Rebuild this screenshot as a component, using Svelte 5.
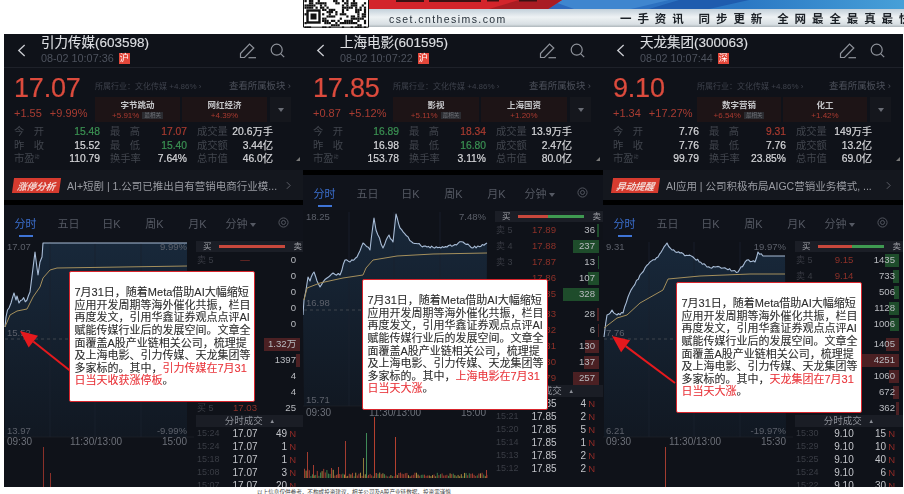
<script>
  function rng(seed) {
    let s = seed;
    return () => {
      s = (s * 16807) % 2147483647;
      return s / 2147483647;
    };
  }

  function densify(pts, amp, seed) {
    const r = rng(seed);
    const out = [];
    for (let i = 0; i < pts.length - 1; i++) {
      const [a, b] = [pts[i], pts[i + 1]];
      const n = Math.max(1, Math.round((b[0] - a[0]) / 1.6));
      for (let k = 0; k < n; k++) {
        const t = k / n;
        out.push([a[0] + (b[0] - a[0]) * t, a[1] + (b[1] - a[1]) * t + (k ? (r() - 0.5) * amp : 0)]);
      }
    }
    out.push(pts[pts.length - 1]);
    return out;
  }

  const toStr = (pts) => pts.map((p) => `${p[0].toFixed(1)},${p[1].toFixed(1)}`).join(' ');
  const shift = (pts, dx) => pts.map((p) => [p[0] - dx, p[1]]);

  function arrowOf(tip, tail) {
    const dx = tail[0] - tip[0];
    const dy = tail[1] - tip[1];
    const len = Math.hypot(dx, dy);
    const ux = dx / len;
    const uy = dy / len;
    const bx = tip[0] + ux * 17;
    const by = tip[1] + uy * 17;
    const head = [
      tip,
      [bx - uy * 7.5, by + ux * 7.5],
      [bx + uy * 7.5, by - ux * 7.5]
    ];
    return { head: toStr(head), x1: bx, y1: by, x2: tail[0], y2: tail[1] };
  }

  const bodyLines = [
    '7月31日，随着Meta借助AI大幅缩短',
    '应用开发周期等海外催化共振，栏目',
    '再度发文，引用华鑫证券观点点评AI',
    '赋能传媒行业后的发展空间。文章全',
    '面覆盖A股产业链相关公司，梳理提',
    '及上海电影、引力传媒、天龙集团等'
  ];

  const p1Line = shift(
    [...densify([[5,327],[6,317],[9,308],[11,303],[14,293],[16,300],[17,296],[19,303],[22,300],[27,300],[30,292],[33,268],[35,252],[37,268],[38,275],[40,262],[42,257],[43,243]], 5, 11), [187,243]],
    4
  );
  const p2Line = shift(
    densify([[303,315],[304,300],[306,290],[308,277],[310,281],[314,272],[317,281],[320,287],[327,278],[333,273],[340,275],[345,260],[350,262],[357,257],[363,243],[370,250],[374,218],[376,230],[383,248],[389,235],[393,242],[396,214],[400,228],[413,243],[427,247],[447,247],[463,242],[473,248],[487,243]], 2.6, 23),
    303
  );
  const p3Line = shift(
    [...densify([[604,337],[607,315],[612,310],[617,315],[623,313],[628,297],[633,287],[640,275],[650,262],[658,257],[667,243],[672,250],[680,253],[693,257],[707,267],[723,268],[738,272],[747,260],[755,262],[758,252],[763,256]], 2.6, 37), [785,256]],
    603
  );

  const p2Vol = [];
  {
    const r = rng(91);
    for (let x = 1; x < 184; x += 1.6) {
      const c = r();
      p2Vol.push({
        x,
        y: 478 - (1.5 + r() * (x < 30 ? 8 : 4)),
        h: 0,
        color: c < 0.5 ? '#9c3b2e' : c < 0.8 ? '#a8873c' : '#3c7a46'
      });
    }
    p2Vol.forEach((b) => (b.h = 478 - b.y));
    [
      [4, 452, '#a33c30'], [10, 465, '#a33c30'], [28, 468, '#a33c30'], [35, 467, '#a33c30'],
      [42, 441, '#a33c30'], [60, 458, '#8f7a3a'], [63, 433, '#3f8a58'], [71, 417, '#b5402f'],
      [92, 437, '#b5402f'], [183, 470, '#a33c30']
    ].forEach(([x, y, color]) => p2Vol.push({ x, y, h: 478 - y, color }));
  }

  const panels = [
    {
      name: '引力传媒(603598)', time: '08-02 10:07:36', mkt: '沪',
      price: '17.07', chg: '+1.55', pct: '+9.99%', leftW: 81,
      chips: [{ n: '字节跳动', v: '+5.91%', tag: true }, { n: '网红经济', v: '+4.39%' }],
      stats: [
        ['今 开', '15.48', 'g', '最 高', '17.07', 'r', '成交量', '20.6万手'],
        ['昨 收', '15.52', '', '最 低', '15.40', 'g', '成交额', '3.44亿'],
        ['市盈', '110.79', '', '换手率', '7.64%', '', '总市值', '46.0亿']
      ],
      alert: { tag: '涨停分析', text: 'AI+短剧 | 1.公司已推出自有营销电商行业模...' },
      bodyTop: 240, base: 339, chartBottom: 437, timeY: 441,
      line: p1Line,
      avg: shift([[5,327],[10,315],[17,311],[27,309],[33,297],[40,287],[43,278],[50,270],[57,268],[187,266]], 4),
      labels: { hi: '17.07', hiPct: '9.99%', mid: '15.52', midY: 336, lo: '13.97', loPct: '-9.99%' },
      times: ['09:30', '11:30/13:00', '15:00'],
      vol: [{ x: 39, y: 447, h: 40, color: '#8a3029' }, { x: 46, y: 473, h: 14, color: '#8a3029' }],
      buyRatio: 1,
      book: [
        ['卖 5', '—', '0', 0, 0], ['', '', '0', 0, 0], ['', '', '0', 0, 0], ['', '', '0', 0, 0], ['', '', '0', 0, 0],
        ['', '', '1.32万', 36, 1], ['', '', '1397', 4, 1], ['', '', '4', 0, 1], ['', '', '4', 0, 1], ['买 5', '17.03', '25', 0, 1]
      ],
      trades: [['15:24','17.07','49'],['15:24','17.07','1'],['15:18','17.07','1'],['15:08','17.07','3'],['15:07','17.07','20']],
      box: { left: 65, top: 237 }, red1: '引力传媒在7月31', red2: '日当天收获涨停板',
      arrow: arrowOf([16, 331], [69, 373])
    },
    {
      name: '上海电影(601595)', time: '08-02 10:07:22', mkt: '沪',
      price: '17.85', chg: '+0.87', pct: '+5.12%', leftW: 80,
      chips: [{ n: '影视', v: '+5.11%', tag: true }, { n: '上海国资', v: '+1.20%' }],
      stats: [
        ['今 开', '16.89', 'g', '最 高', '18.34', 'r', '成交量', '13.9万手'],
        ['昨 收', '16.98', '', '最 低', '16.80', 'g', '成交额', '2.47亿'],
        ['市盈', '153.78', '', '换手率', '3.11%', '', '总市值', '80.0亿']
      ],
      alert: null,
      bodyTop: 210, base: 310, chartBottom: 406, timeY: 412,
      line: p2Line,
      avg: shift([[304,300],[307,288],[320,283],[343,278],[363,275],[366,268],[373,260],[397,256],[433,254],[487,253]], 303),
      labels: { hi: '18.25', hiPct: '7.48%', mid: '16.98', midY: 306, lo: '15.71', loPct: '' },
      times: ['09:30', '11:30/13:00', '15:00'],
      vol: p2Vol,
      buyRatio: 0.45,
      book: [
        ['卖 5', '17.89', '36', 2, 0], ['卖 4', '17.88', '237', 26, 0], ['卖 3', '17.87', '13', 1, 0], ['', '17.86', '107', 11, 0], ['', '17.85', '328', 36, 0],
        ['', '17.83', '28', 2, 1], ['', '17.82', '6', 1, 1], ['', '17.81', '130', 14, 1], ['', '17.80', '137', 15, 1], ['', '17.79', '257', 26, 1]
      ],
      trades: [['','17.85','4'],['15:21','17.85','2'],['15:20','17.85','5'],['15:14','17.85','1'],['15:13','17.85','2'],['15:12','17.85','2']],
      box: { left: 59, top: 245 }, red1: '上海电影在7月31', red2: '日当天大涨',
      arrow: null
    },
    {
      name: '天龙集团(300063)', time: '08-02 10:07:44', mkt: '深',
      price: '9.10', chg: '+1.34', pct: '+17.27%', leftW: 84,
      chips: [{ n: '数字营销', v: '+6.54%', tag: true }, { n: '化工', v: '+1.42%' }],
      stats: [
        ['今 开', '7.76', '', '最 高', '9.31', 'r', '成交量', '149万手'],
        ['昨 收', '7.76', '', '最 低', '7.76', '', '成交额', '13.2亿'],
        ['市盈', '99.79', '', '换手率', '23.85%', '', '总市值', '69.0亿']
      ],
      alert: { tag: '异动提醒', text: 'AI应用 | 公司积极布局AIGC营销业务模式, ...' },
      bodyTop: 240, base: 339, chartBottom: 437, timeY: 441,
      line: p3Line,
      avg: shift([[604,328],[617,318],[627,315],[640,303],[663,290],[668,279],[700,276],[750,274],[785,274]], 603),
      labels: { hi: '9.31', hiPct: '19.97%', mid: '7.76', midY: 336, lo: '6.21', loPct: '-19.97%' },
      times: ['09:30', '11:30/13:00', '15:30'],
      vol: [{ x: 62, y: 447, h: 40, color: '#a33c30' }],
      buyRatio: 0.52,
      book: [
        ['卖 5', '9.15', '1435', 14, 0], ['卖 4', '9.14', '733', 6, 0], ['', '', '506', 5, 0], ['', '', '1128', 10, 0], ['', '', '1006', 9, 0],
        ['', '', '1405', 13, 1], ['', '', '4251', 38, 1], ['', '', '1060', 10, 1], ['', '', '672', 6, 1], ['', '', '362', 3, 1]
      ],
      trades: [['15:30','9.10','15'],['15:29','9.10','10'],['15:25','9.10','40'],['15:24','9.10','6'],['15:22','9.10','30']],
      box: { left: 73, top: 248 }, red1: '天龙集团在7月31', red2: '日当天大涨',
      arrow: arrowOf([9, 336], [72, 383])
    }
  ];

  const tabs = ['分时', '五日', '日K', '周K', '月K'];

  const qrCells = [];
  {
    const r = rng(7);
    for (let y = 0; y < 27; y += 2.2) {
      for (let x = 1.5; x < 63; x += 2.2) {
        const inFinder = x > 2 && x < 19 && y > 8 && y < 25;
        if (!inFinder && r() < 0.5) qrCells.push({ x, y });
      }
    }
  }
</script>

<div class="page">
  <header class="banner">
    <svg class="qr" viewBox="0 0 66 28" aria-hidden="true">
      <rect width="66" height="28" fill="#fff" />
      {#each qrCells as c}
        <rect x={c.x} y={c.y} width="2.2" height="2.2" fill="#111" />
      {/each}
      <rect x="4.5" y="10.5" width="12" height="12" fill="#fff" stroke="#111" stroke-width="2.4" />
      <rect x="7.5" y="13.5" width="6" height="6" fill="#111" />
      <path d="M.5 0V27.2H65.5V0" fill="none" stroke="#111" />
    </svg>
    <div class="banner-main">
      <svg class="art" viewBox="0 0 535 9" preserveAspectRatio="none" aria-hidden="true">
        <defs>
          <linearGradient id="blueband" x1="0" x2="1">
            <stop offset="0" stop-color="#2453a8" />
            <stop offset="0.35" stop-color="#2d69bd" />
            <stop offset="0.7" stop-color="#2b78c4" />
            <stop offset="1" stop-color="#47a0d8" />
          </linearGradient>
        </defs>
        <rect width="535" height="9" fill="url(#blueband)" />
        <polygon points="180,0 300,0 262,9 205,9" fill="#3f86cf" />
        <polygon points="310,0 380,0 340,9 280,9" fill="#1f5cae" />
        <polygon points="0,0 193,0 179,9 0,9" fill="#d3242b" />
        <polygon points="150,0 193,0 179,9 120,9" fill="#a91c23" />
        <rect x="27" y="0" width="28" height="2" fill="#3a1214" />
        <rect x="60" y="0" width="52" height="2" fill="#3a1214" />
        <rect x="118" y="0" width="12" height="1.5" fill="#3a1214" />
        <rect x="150" y="0" width="18" height="1.5" fill="#3a1214" />
      </svg>
      <div class="strip">
        <span class="site">cset.cnthesims.com</span>
        <span class="slogan"><span>一手资讯</span><span>同步更新</span><span>全网最全最真最快</span></span>
      </div>
    </div>
  </header>

  <main class="row">
    {#each panels as p}
      <section class="panel">
        <div class="head">
          <svg class="back" viewBox="0 0 10 14" aria-hidden="true"><path d="M8.5 1 2 7l6.5 6" /></svg>
          <div class="titles">
            <div class="title">{p.name}</div>
            <div class="sub">{p.time}<span class="mkt">{p.mkt}</span></div>
          </div>
          <svg class="pencil" viewBox="0 0 18 17" aria-hidden="true">
            <path d="M1.5 11.5 10.5 2l4.3 4-9.3 9.5H1.5Z" /><path d="M9.5 15.7H17" />
          </svg>
          <svg class="search" viewBox="0 0 15 15" aria-hidden="true">
            <circle cx="6.7" cy="6.7" r="5.5" /><path d="m10.8 10.8 3.4 3.4" />
          </svg>
        </div>

        <div class="quote">
          <div class="quote-top">
            <div class="left" style="width:{p.leftW}px">
              <div class="price">{p.price}</div>
              <div class="delta"><span>{p.chg}</span><span>{p.pct}</span></div>
            </div>
            <div class="right">
              <div class="info">
                <span class="ind">所属行业：文化传媒 +4.86% ›</span>
                <span class="see">查看所属板块 ›</span>
              </div>
              <div class="chips">
                {#each p.chips as c}
                  <div class="chip">
                    <div class="chip-n">{c.n}</div>
                    <div class="chip-v">{c.v}{#if c.tag}<span class="chip-tag">最相关</span>{/if}</div>
                  </div>
                {/each}
                <div class="chip-more"><i></i></div>
              </div>
            </div>
          </div>
          <div class="stats">
            {#each p.stats as s, i}
              <span class="lab" class:plain={i === 2}>{s[0]}{#if i === 2}<sup>动</sup>{/if}</span><span class="val {s[2]}">{s[1]}</span>
              <span class="lab">{s[3]}</span><span class="val {s[5]}">{s[4]}</span>
              <span class="lab">{s[6]}</span><span class="val">{s[7]}</span>
            {/each}
          </div>
          <i class="corner"></i>
        </div>

        {#if p.alert}
          <div class="alert">
            <span class="alert-tag"><em>{p.alert.tag}</em></span>
            <span class="alert-text">{p.alert.text}</span>
            <svg class="alert-chev" viewBox="0 0 6 10" aria-hidden="true"><path d="m1 1 4 4-4 4" /></svg>
          </div>
        {/if}
        <div class="gap"></div>

        <nav class="tabs">
          {#each tabs as t, i}
            <span class:active={i === 0}>{t}</span>
          {/each}
          <span>分钟<b class="caret"></b></span>
          <span>
            <svg class="target" viewBox="0 0 12 12" aria-hidden="true"><circle cx="6" cy="6" r="5" /><circle cx="6" cy="6" r="2.2" /></svg>
          </span>
        </nav>

        <div class="body">
          <svg class="chart" viewBox="0 {p.bodyTop} 192 {487 - p.bodyTop}" aria-hidden="true">
            <defs>
              <linearGradient id="area{p.price}" x1="0" x2="0" y1="0" y2="1">
                <stop offset="0" stop-color="#18283a" />
                <stop offset="1" stop-color="#111822" />
              </linearGradient>
            </defs>
            <polygon
              points="{toStr(p.line)} 183,{p.chartBottom} 1,{p.chartBottom}"
              fill="url(#area{p.price})"
            />
            {#each [46, 91, 137] as gx}
              <line x1={gx} x2={gx} y1={p.bodyTop + 2} y2={p.chartBottom} stroke="#1b222e" stroke-width="0.8" />
            {/each}
            <line x1="1" x2="183" y1={p.base} y2={p.base} stroke="#4a4e57" stroke-width="0.8" stroke-dasharray="3 3" />
            <line x1="0" x2="190" y1={p.chartBottom} y2={p.chartBottom} stroke="#22262e" stroke-width="0.6" />
            <polyline points={toStr(p.line)} fill="none" stroke="#a8bcd6" stroke-width="1.1" stroke-linejoin="round" />
            <polyline points={toStr(p.avg)} fill="none" stroke="#a48f5c" stroke-width="1" />

            <text class="cl" x="3" y={p.bodyTop + 9.5}>{p.labels.hi}</text>
            <text class="cl end" x="183" y={p.bodyTop + 9.5}>{p.labels.hiPct}</text>
            <text class="cl" x="3" y={p.labels.midY}>{p.labels.mid}</text>
            <text class="cl" x="3" y={p.chartBottom - 3.5}>{p.labels.lo}</text>
            {#if p.labels.loPct}<text class="cl end" x="183" y={p.chartBottom - 3.5}>{p.labels.loPct}</text>{/if}
            <text class="tl" x="3" y={p.timeY + 3.5}>{p.times[0]}</text>
            <text class="tl mid" x="92" y={p.timeY + 3.5}>{p.times[1]}</text>
            <text class="tl end" x="183" y={p.timeY + 3.5}>{p.times[2]}</text>

            {#each p.vol as v}
              <rect x={v.x} y={v.y} width="1" height={v.h} fill={v.color} />
            {/each}
          </svg>

          <div class="book">
            <div class="book-head">
              <span>买</span>
              <span class="ratio">
                <i class="buy" style="flex:{p.buyRatio}"></i>
                <i class="sell" style="flex:{1 - p.buyRatio}"></i>
              </span>
              <span>卖</span>
            </div>
            <div class="book-rows">
              {#each p.book as b, i}
                <div class="book-row" class:split={i === 5}>
                  <span class="bl">{b[0]}</span>
                  <span class="bp">{b[1]}</span>
                  <span class="bq">{b[2]}</span>
                  {#if b[3]}<i class="depth" class:up={b[4] === 1} style="width:{b[3]}px"></i>{/if}
                </div>
              {/each}
            </div>
            <div class="trade-head">分时成交 <small>▲</small></div>
            <div class="trades">
              {#each p.trades as t}
                <div class="trade">
                  <span class="bl">{t[0]}</span>
                  <span class="tp">{t[1]}</span>
                  <span class="tq">{t[2]}</span>
                  <span class="tn">N</span>
                </div>
              {/each}
            </div>
          </div>
        </div>

        {#if p.arrow}
          <svg class="overlay" viewBox="0 34 300 453" aria-hidden="true">
            <line x1={p.arrow.x1} y1={p.arrow.y1} x2={p.arrow.x2} y2={p.arrow.y2} stroke="#e5191d" stroke-width="2" />
            <polygon points={p.arrow.head} fill="#e5191d" />
          </svg>
        {/if}

        <div class="callout" style="left:{p.box.left}px;top:{p.box.top}px">
          {#each bodyLines as l}
            <div>{l}</div>
          {/each}
          <div>多家标的。其中，<span class="hl">{p.red1}</span></div>
          <div><span class="hl">{p.red2}</span>。</div>
        </div>
      </section>
    {/each}
  </main>

  <footer class="foot">以上信息仅供参考，不构成投资建议，相关公司及A股产业链数据，投资需谨慎</footer>
</div>

<style>
  :global(body) {
    margin: 0;
    background: #fff;
    overflow: hidden;
  }
  .page {
    width: 904px;
    height: 494px;
    overflow: hidden;
    font-family: "Liberation Sans", "Noto Sans CJK SC", sans-serif;
  }
  .banner {
    display: flex;
    height: 28px;
    margin-left: 303px;
    margin-bottom: 6px;
  }
  .qr {
    width: 66px;
    height: 28px;
    flex: none;
  }
  .banner-main {
    flex: 1;
    min-width: 0;
    display: flex;
    flex-direction: column;
  }
  .art {
    display: block;
    width: 100%;
    height: 9px;
  }
  .strip {
    height: 18px;
    display: flex;
    align-items: center;
    overflow: hidden;
    white-space: nowrap;
    background: linear-gradient(#c3d0da, #eef2f4 45%, #d8dfe3 85%, #aeb6bb),
      #eee;
    filter: blur(0.3px);
  }
  .site {
    width: 251px;
    flex: none;
    box-sizing: border-box;
    padding-left: 20px;
    padding-top: 1px;
    font-size: 10.5px;
    letter-spacing: 1.42px;
    color: #26303a;
  }
  .slogan {
    font-size: 11.5px;
    letter-spacing: 5.9px;
    color: #1b2026;
    font-weight: 700;
    font-family: "Noto Sans CJK SC", sans-serif;
  }
  .slogan span {
    margin-right: 9px;
  }
  .row {
    display: flex;
    padding-left: 4px;
    height: 453px;
    filter: blur(0.45px);
  }
  .panel {
    position: relative;
    flex: 0 0 300px;
    width: 300px;
    height: 453px;
    overflow: hidden;
    background: #0f1219;
    display: flex;
    flex-direction: column;
    color: #d8d8d8;
  }
  .panel:first-child {
    flex-basis: 299px;
  }
  .head {
    height: 34px;
    flex: none;
    display: flex;
    align-items: center;
    box-sizing: border-box;
    padding: 0 18px 0 13px;
    border-bottom: 1px solid #1e2129;
  }
  .back {
    width: 9px;
    height: 13px;
    margin-right: 15px;
    fill: none;
    stroke: #c8cacf;
    stroke-width: 1.5;
  }
  .titles {
    flex: 1;
    margin-top: -1px;
  }
  .title {
    font-size: 13.5px;
    line-height: 17px;
    color: #dcdee2;
    -webkit-text-stroke: 0.15px #dcdee2;
    margin-top: -1px;
  }
  .sub {
    font-size: 10.8px;
    line-height: 13px;
    color: #4d525d;
    display: flex;
    align-items: center;
    gap: 5px;
    margin-top: 1px;
  }
  .mkt {
    width: 11px;
    height: 11px;
    background: #e4473a;
    color: #fff;
    font-size: 9px;
    line-height: 11px;
    text-align: center;
  }
  .pencil {
    width: 18px;
    height: 17px;
    margin-right: 13px;
    fill: none;
    stroke: #8f939b;
    stroke-width: 1.2;
  }
  .search {
    width: 15px;
    height: 15px;
    fill: none;
    stroke: #8f939b;
    stroke-width: 1.2;
  }
  .quote {
    position: relative;
    height: 102px;
    flex: none;
    box-sizing: border-box;
    padding: 6px 12px 0 10px;
  }
  .quote-top {
    display: flex;
    height: 51px;
  }
  .left {
    flex: none;
  }
  .price {
    font-size: 27px;
    line-height: 28px;
    color: #dc4b3d;
    letter-spacing: -0.2px;
    -webkit-text-stroke: 0.2px #dc4b3d;
  }
  .delta {
    display: flex;
    gap: 8px;
    margin-top: 4px;
    font-size: 11px;
    line-height: 14px;
    color: #a83c32;
    white-space: nowrap;
  }
  .right {
    flex: 1;
    min-width: 0;
  }
  .info {
    height: 23px;
    display: flex;
    justify-content: space-between;
    align-items: center;
    padding-bottom: 1px;
    box-sizing: border-box;
    white-space: nowrap;
  }
  .ind {
    font-size: 8px;
    color: #3d414b;
  }
  .see {
    font-size: 9.4px;
    color: #4d515b;
  }
  .chips {
    display: flex;
    gap: 2px;
    height: 25px;
  }
  .chip {
    flex: 1;
    background: #1d1416;
    text-align: center;
  }
  .chip-n {
    font-size: 8.5px;
    line-height: 10px;
    margin-top: 3px;
    color: #c4c5c8;
    font-weight: 700;
  }
  .chip-v {
    font-size: 8px;
    line-height: 11px;
    color: #a93a30;
    display: flex;
    justify-content: center;
    align-items: center;
    gap: 3px;
  }
  .chip-tag {
    font-size: 5.5px;
    line-height: 7px;
    padding: 0 2px;
    background: #2b2c31;
    color: #6f7177;
  }
  .chip-more {
    flex: 0 0 21px;
    margin-left: 1px;
    background: #15171d;
    display: flex;
    align-items: center;
    justify-content: center;
  }
  .chip-more i {
    width: 0;
    height: 0;
    border: 3.5px solid transparent;
    border-top: 4.5px solid #6a6d75;
    border-bottom: 0;
  }
  .stats {
    display: grid;
    grid-template-columns: 30px 56px 30px 57px 30px 56px;
    column-gap: 0;
    font-size: 10.3px;
    line-height: 13.7px;
    margin-top: 0;
  }
  .stats .lab {
    color: #41454d;
    white-space: nowrap;
    text-align-last: justify;
    margin-left: 0;
  }
  .stats .lab.plain {
    text-align-last: left;
  }
  .stats .lab:nth-child(6n + 3),
  .stats .lab:nth-child(6n + 5) {
    transform: translateX(10px);
  }
  .stats .val {
    text-align: right;
    color: #d6d7da;
    white-space: nowrap;
    -webkit-text-stroke: 0.2px currentColor;
  }
  .stats sup {
    font-size: 5px;
    line-height: 0;
    vertical-align: 4px;
  }
  .val.g {
    color: #3b9253;
  }
  .val.r {
    color: #a83b30;
  }
  .corner {
    position: absolute;
    right: 3px;
    bottom: 9px;
    width: 0;
    height: 0;
    border-left: 4px solid transparent;
    border-bottom: 4px solid #777;
  }
  .alert {
    height: 30px;
    flex: none;
    background: #14171e;
    display: flex;
    align-items: center;
    box-sizing: border-box;
    padding: 0 12px 0 9px;
    gap: 7px;
  }
  .alert-tag {
    flex: none;
    width: 47px;
    height: 15px;
    background: #d63b2f;
    transform: skewX(-8deg);
    display: flex;
    align-items: center;
    justify-content: center;
  }
  .alert-tag em {
    font-size: 9.5px;
    font-weight: 700;
    color: #f4d9d5;
  }
  .alert-text {
    flex: 1;
    min-width: 0;
    font-size: 10.5px;
    color: #9a9ca3;
    white-space: nowrap;
    overflow: hidden;
  }
  .alert-chev {
    width: 5px;
    height: 9px;
    fill: none;
    stroke: #6b6e76;
  }
  .gap {
    height: 5px;
    flex: none;
    background: #000;
  }
  .tabs {
    height: 35px;
    flex: none;
    display: grid;
    grid-template-columns: repeat(7, 43px);
    align-items: center;
    justify-items: center;
    font-size: 11px;
    color: #555963;
    background: #10131b;
    position: relative;
    white-space: nowrap;
  }
  .tabs .active {
    color: #3b6fcf;
    position: relative;
  }
  .tabs .active::after {
    content: "";
    position: absolute;
    left: 4px;
    right: 4px;
    bottom: -6px;
    height: 2px;
    background: #3f74d6;
  }
  .caret {
    display: inline-block;
    width: 0;
    height: 0;
    margin-left: 2px;
    vertical-align: 1px;
    border: 3px solid transparent;
    border-top: 4px solid #555963;
    border-bottom: 0;
  }
  .target {
    width: 11px;
    height: 11px;
    display: block;
    fill: none;
    stroke: #555963;
  }
  .body {
    flex: 1;
    min-height: 0;
    display: flex;
  }
  .chart {
    width: 192px;
    flex: none;
    height: 100%;
    display: block;
  }
  .cl {
    font-size: 9.5px;
    fill: #5c606a;
  }
  .tl {
    font-size: 10px;
    fill: #6c7079;
  }
  .end {
    text-anchor: end;
  }
  .mid {
    text-anchor: middle;
  }
  .book {
    width: 108px;
    flex: none;
  }
  .book-head {
    height: 11px;
    margin-top: 1px;
    background: #1b1e26;
    display: flex;
    align-items: center;
    gap: 4px;
    padding: 0 2px 0 7px;
    font-size: 8.5px;
    line-height: 11px;
    color: #a0a2a8;
  }
  .ratio {
    flex: 1;
    display: flex;
    height: 3.5px;
    margin: 0 4px 0 3px;
  }
  .ratio i {
    display: block;
    min-width: 0;
  }
  .buy {
    background: #c8483c;
  }
  .sell {
    background: #3f9a51;
  }
  .book-row {
    position: relative;
    height: 16px;
    display: grid;
    grid-template-columns: 26px 46px 28px;
    align-items: center;
    font-size: 9.6px;
    line-height: 16px;
  }
  .book-row.split {
    margin-top: 4px;
  }
  .bl {
    padding-left: 1px;
    font-size: 9px;
    color: #3a3d45;
    white-space: nowrap;
  }
  .bp {
    text-align: center;
    color: #8d3129;
  }
  .bq {
    position: relative;
    z-index: 1;
    text-align: right;
    color: #b9bbc0;
    white-space: nowrap;
  }
  .depth {
    position: absolute;
    right: 4px;
    top: 1.5px;
    height: 13px;
    background: #1e4c2b;
  }
  .depth.up {
    background: #4b2023;
  }
  .trade-head {
    height: 12px;
    margin-top: -1px;
    background: #1a1d25;
    text-align: center;
    font-size: 9.5px;
    line-height: 12px;
    color: #8c8f97;
  }
  .trade-head small {
    font-size: 6px;
    margin-left: 4px;
    vertical-align: 1px;
  }
  .trade {
    height: 13px;
    display: grid;
    grid-template-columns: 26px 46px 19px 9px;
    align-items: center;
    font-size: 10px;
    line-height: 13px;
  }
  .tp {
    text-align: center;
    color: #c3c5ca;
  }
  .tq {
    text-align: right;
    color: #c3c5ca;
  }
  .tn {
    text-align: right;
    color: #8f2a26;
    font-size: 9.5px;
  }
  .overlay {
    position: absolute;
    left: 0;
    top: 0;
    width: 300px;
    height: 453px;
    pointer-events: none;
  }
  .callout {
    position: absolute;
    width: 186px;
    height: 131px;
    box-sizing: border-box;
    background: #fff;
    border: 1.5px solid #d8252c;
    border-radius: 2px;
    display: flex;
    flex-direction: column;
    justify-content: center;
    padding-left: 4.5px;
    font-size: 11px;
    line-height: 12.6px;
    color: #2c2c2c;
    -webkit-text-stroke: 0.1px currentColor;
    white-space: nowrap;
  }
  .hl {
    color: #e9343a;
  }
  .foot {
    margin-left: 257px;
    margin-top: 2px;
    font-size: 5.6px;
    line-height: 7px;
    color: #444;
    white-space: nowrap;
  }
</style>
